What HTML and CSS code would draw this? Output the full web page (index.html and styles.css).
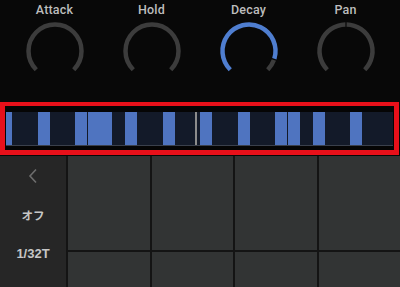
FILE: index.html
```html
<!DOCTYPE html>
<html lang="ja">
<head>
<meta charset="utf-8">
<title>Sequencer</title>
<link rel="stylesheet" href="styles.css">
</head>
<body>
<div class="app">
  <div class="knobs">
    <div class="knob">
      <div class="label">Attack</div>
      <svg class="dial" viewBox="0 0 62 62" width="62" height="62">
        <path class="track" d="M12.26 49.74 A26.5 26.5 0 1 1 49.74 49.74"/>
      </svg>
    </div>
    <div class="knob">
      <div class="label">Hold</div>
      <svg class="dial" viewBox="0 0 62 62" width="62" height="62">
        <path class="track" d="M12.26 49.74 A26.5 26.5 0 1 1 49.74 49.74"/>
      </svg>
    </div>
    <div class="knob">
      <div class="label">Decay</div>
      <svg class="dial" viewBox="0 0 62 62" width="62" height="62">
        <path class="track" d="M55.9 40.06 A26.5 26.5 0 0 1 49.74 49.74"/>
        <path class="value" d="M12.26 49.74 A26.5 26.5 0 1 1 56.34 38.75"/>
      </svg>
    </div>
    <div class="knob">
      <div class="label">Pan</div>
      <svg class="dial" viewBox="0 0 62 62" width="62" height="62">
        <path class="track" d="M12.26 49.74 A26.5 26.5 0 0 1 30.4 4.51"/>
        <path class="track" d="M31.6 4.51 A26.5 26.5 0 0 1 49.74 49.74"/>
      </svg>
    </div>
  </div>

  <div class="highlight">
    <div class="strip">
      <div class="steps">
        <div class="step on"></div><div class="step"></div><div class="step"></div><div class="step on"></div>
        <div class="step"></div><div class="step"></div><div class="step on"></div><div class="step on"></div>
        <div class="step on"></div><div class="step"></div><div class="step on"></div><div class="step"></div>
        <div class="step"></div><div class="step on"></div><div class="step"></div><div class="step"></div>
        <div class="step on"></div><div class="step"></div><div class="step"></div><div class="step on"></div>
        <div class="step"></div><div class="step"></div><div class="step on"></div><div class="step on"></div>
        <div class="step"></div><div class="step on"></div><div class="step"></div><div class="step"></div>
        <div class="step on"></div><div class="step"></div><div class="step"></div><div class="step"></div>
      </div>
      <div class="playhead"></div>
    </div>
  </div>

  <div class="pads">
    <div class="side">
      <div class="side-item back">
        <svg viewBox="0 0 10 16" width="10" height="16"><polyline points="8,1.5 2,8 8,14.5"/></svg>
      </div>
      <div class="side-item jp">オフ</div>
      <div class="side-item">1/32T</div>
      <div class="side-item">1/32</div>
    </div>
    <div class="pad"></div>
    <div class="pad"></div>
    <div class="pad"></div>
    <div class="pad"></div>
    <div class="pad"></div>
    <div class="pad"></div>
    <div class="pad"></div>
    <div class="pad"></div>
  </div>
</div>
</body>
</html>
```

FILE: styles.css
```css
* { box-sizing: border-box; }

html, body {
  margin: 0;
  padding: 0;
  background: #080808;
}

body {
  width: 400px;
  height: 287px;
  overflow: hidden;
  font-family: "Liberation Sans", "Noto Sans CJK JP", sans-serif;
}

.app {
  display: flex;
  flex-direction: column;
  width: 400px;
  height: 287px;
}

.knobs {
  height: 102px;
  padding: 2px 6px 0;
  display: grid;
  grid-template-columns: repeat(4, 97px);
}

.knob {
  display: flex;
  flex-direction: column;
  align-items: center;
}

.label {
  font-family: Roboto, "Liberation Sans", sans-serif;
  font-size: 12.5px;
  line-height: 15px;
  font-weight: 500;
  color: #bdbdbd;
  letter-spacing: 0.2px;
}

.dial {
  margin-top: 3px;
  display: block;
}

.dial path {
  fill: none;
  stroke-width: 4.5;
}

.dial .track { stroke: #3c3c3c; }
.dial .value { stroke: #4f7ed0; }

.highlight {
  width: 399px;
  height: 53px;
  border: 5px solid #e8101a;
  border-top-width: 4px;
  padding: 6px 0 4px 1px;
  background: #050505;
}

.strip {
  position: relative;
  width: 387px;
  height: 34px;
  background: #131a29;
  border-bottom: 1px solid #3a404c;
  overflow: hidden;
}

.steps {
  margin-left: -6px;
  height: 100%;
  display: grid;
  grid-template-columns: repeat(32, 12.5px);
}

.step { width: 12px; }
.step.on { background: #4f74c0; }

.playhead {
  position: absolute;
  left: 189px;
  top: 0;
  bottom: 0;
  width: 2px;
  background: #8c8c8c;
}

.pads {
  flex: 1;
  min-height: 0;
  margin-top: 1px;
  background: #141414;
  display: grid;
  grid-template-columns: 66px repeat(4, 1fr);
  grid-template-rows: 94px 1fr;
  gap: 2px;
  overflow: hidden;
}

.side {
  grid-row: 1 / 3;
  background: #262626;
  display: flex;
  flex-direction: column;
}

.side-item {
  flex: 0 0 39px;
  display: flex;
  align-items: center;
  justify-content: center;
  font-size: 13px;
  font-weight: bold;
  color: #c6c6c6;
}

.side-item.jp { font-size: 11.5px; }

.side-item svg polyline {
  fill: none;
  stroke: #6d6d6d;
  stroke-width: 1.6;
}

.pad { background: #323434; }
```
